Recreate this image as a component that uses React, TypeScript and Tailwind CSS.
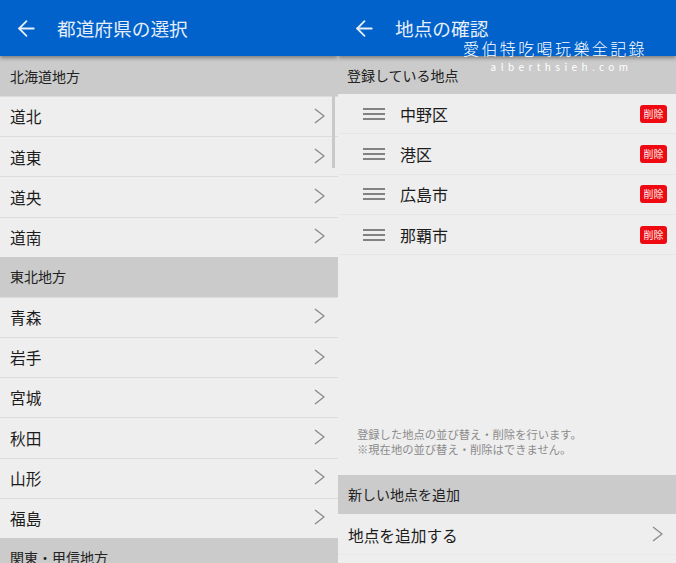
import { ArrowLeft } from 'lucide-react'

const JP = `"Noto Sans CJK JP", "Noto Sans", sans-serif`

const GROUPS = [
  { title: '北海道地方', items: ['道北', '道東', '道央', '道南'] },
  { title: '東北地方', items: ['青森', '岩手', '宮城', '秋田', '山形', '福島'] },
  { title: '関東・甲信地方', items: [] as string[] },
]

const PLACES = ['中野区', '港区', '広島市', '那覇市']

function Header({ title }: { title: string }) {
  return (
    <header className="relative z-10 flex h-[56px] shrink-0 items-center bg-[#0162cb] pl-[14px] text-[#e6eff9] shadow-[0_2px_4px_rgba(0,0,0,0.4)]">
      <ArrowLeft className="h-[25px] w-[25px]" strokeWidth={1.7} />
      <h1 className="ml-[18px] text-[18.7px] leading-none font-normal">{title}</h1>
    </header>
  )
}

function SectionTitle({ title, className }: { title: string; className: string }) {
  return (
    <div className={`flex shrink-0 items-center bg-[#cbcbcb] text-[14px] text-[#222] ${className}`}>
      {title}
    </div>
  )
}

function Chevron() {
  return (
    <svg className="mb-[3px] h-[16px] w-[11px] text-[#8a8a8a]" viewBox="0 0 11 16" fill="none" stroke="currentColor" strokeWidth="1.4">
      <polyline points="1,1 10,8 1,15" />
    </svg>
  )
}

function PrefectureList() {
  return (
    <section className="relative flex h-[563px] w-[338px] flex-col overflow-hidden">
      <Header title="都道府県の選択" />
      {GROUPS.map((group) => (
        <div key={group.title} className="flex shrink-0 flex-col">
          <SectionTitle title={group.title} className="h-[40px] pl-[10px]" />
          {group.items.map((item) => (
            <div
              key={item}
              className="flex h-[40.2px] items-center justify-between border-t border-[#dcdcdc] pt-[1px] pr-[13px] pl-[10px] text-[15.7px] text-[#1c1c1c] first-of-type:border-t-0"
            >
              <span>{item}</span>
              <Chevron />
            </div>
          ))}
        </div>
      ))}
      {/* Scrollbar */}
      <div className="absolute top-[95px] right-[3px] h-[73px] w-[3px] bg-[#c9c9c9]" />
    </section>
  )
}

function PlaceList() {
  return (
    <section className="relative flex h-[563px] w-[338px] flex-col overflow-hidden">
      <Header title="地点の確認" />
      <SectionTitle title="登録している地点" className="h-[38px] pl-[9px]" />
      {PLACES.map((place) => (
        <div key={place} className="flex h-[40.3px] shrink-0 items-center border-b border-[#e6e6e6] pr-[9px] pl-[25px]">
          <div className="flex w-[22px] flex-col gap-[3px]">
            <span className="h-[2px] bg-[#828282]" />
            <span className="h-[2px] bg-[#828282]" />
            <span className="h-[2px] bg-[#828282]" />
          </div>
          <span className="ml-[15px] text-[16px] text-[#1c1c1c]">{place}</span>
          <span className="ml-auto flex h-[18px] w-[27px] items-center justify-center rounded-[3px] bg-[#ee0a10] text-[10px] leading-none font-medium text-[#f7d5d5]">
            削除
          </span>
        </div>
      ))}
      <div className="flex flex-1 flex-col justify-end pb-[18px] pl-[19px] text-[11.3px] leading-[15px] text-[#8b8b8b]">
        <p>登録した地点の並び替え・削除を行います。</p>
        <p>※現在地の並び替え・削除はできません。</p>
      </div>
      <SectionTitle title="新しい地点を追加" className="h-[39px] pl-[10px]" />
      <div className="flex h-[40px] shrink-0 items-center justify-between pt-[3px] pr-[13px] pl-[10px] text-[15.7px] text-[#1c1c1c]">
        <span>地点を追加する</span>
        <Chevron />
      </div>
      <div className="h-[9px] shrink-0 border-t border-[#e8e8e8]" />
      {/* Watermark */}
      <div className="absolute top-[38px] left-[125px] z-20 flex w-[184px] flex-col items-center text-white">
        <span className="text-[16px] leading-[20px] font-light tracking-[2.4px] whitespace-nowrap">愛伯特吃喝玩樂全記錄</span>
        <span className="mt-[3px] ml-[13px] text-[10px] leading-[12px] tracking-[4.4px] whitespace-nowrap">alberthsieh.com</span>
      </div>
    </section>
  )
}

export default function App() {
  return (
    <div className="flex h-[563px] w-[676px] overflow-hidden bg-[#eeeeee]" style={{ fontFamily: JP }}>
      <PrefectureList />
      <PlaceList />
    </div>
  )
}
